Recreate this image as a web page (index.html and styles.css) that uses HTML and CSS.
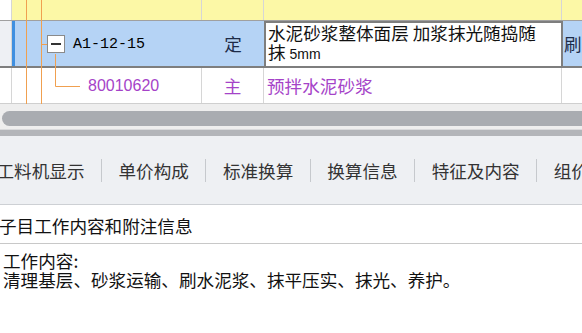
FILE: index.html
```html
<!DOCTYPE html>
<html lang="zh-CN">
<head>
<meta charset="utf-8">
<link rel="stylesheet" href="styles.css">
</head>
<body>
<div class="grid">
  <div class="row row-yellow">
    <div class="cell gutter"></div>
    <div class="cell tree"></div>
    <div class="cell type"></div>
    <div class="cell desc"></div>
    <div class="cell extra"></div>
  </div>
  <div class="row row-sel">
    <div class="cell gutter"></div>
    <div class="cell tree tree-sel">
      <span class="toggle"><span class="minus"></span></span>
      <span class="code">A1-12-15</span>
    </div>
    <div class="cell type type-sel">定</div>
    <div class="cell desc desc-sel">水泥砂浆整体面层 加浆抹光随捣随<br>抹 <span class="unit">5mm</span></div>
    <div class="cell extra extra-sel">刷</div>
  </div>
  <div class="row row-child">
    <div class="cell gutter"></div>
    <div class="cell tree tree-child"><span class="child-code">80010620</span></div>
    <div class="cell type purple">主</div>
    <div class="cell desc purple">预拌水泥砂浆</div>
    <div class="cell extra"></div>
  </div>
  <svg class="tree-lines" width="100" height="105" viewBox="0 0 100 105">
    <g stroke="#f0a050" stroke-width="1" fill="none">
      <line x1="26.5" y1="0" x2="26.5" y2="105"/>
      <line x1="41.5" y1="0" x2="41.5" y2="105"/>
      <line x1="41.5" y1="44.5" x2="47" y2="44.5"/>
      <line x1="55.5" y1="54" x2="55.5" y2="86.5"/>
      <line x1="55.5" y1="86.5" x2="80" y2="86.5"/>
    </g>
  </svg>
</div>
<div class="hscroll"><div class="thumb"></div></div>
<div class="splitter"></div>
<div class="tabs">
  <span class="tab">工料机显示</span><span class="sep"></span>
  <span class="tab">单价构成</span><span class="sep"></span>
  <span class="tab">标准换算</span><span class="sep"></span>
  <span class="tab">换算信息</span><span class="sep"></span>
  <span class="tab">特征及内容</span><span class="sep"></span>
  <span class="tab">组价方案</span>
</div>
<div class="panel">
  <div class="panel-title">子目工作内容和附注信息</div>
  <div class="panel-body">
    <div>工作内容:</div>
    <div>清理基层、砂浆运输、刷水泥浆、抹平压实、抹光、养护。</div>
  </div>
</div>
</body>
</html>
```
FILE: styles.css
```css
* { box-sizing: border-box; }
html, body {
  margin: 0;
  padding: 0;
  width: 582px;
  height: 333px;
  overflow: hidden;
  background: #ffffff;
  font-family: "Noto Sans CJK SC", "Noto Sans", sans-serif;
  color: #111;
}
.grid {
  position: relative;
  width: 582px;
  overflow: hidden;
}
.row {
  display: flex;
  width: 640px;
}
.cell {
  flex: none;
  border-right: 1px solid #d6d6d6;
  overflow: hidden;
  white-space: nowrap;
}
.gutter { width: 12px; }
.tree { width: 190px; }
.type { width: 62px; }
.desc { width: 298px; }
.extra { width: 78px; border-right: none; }

.row-yellow {
  height: 21px;
  border-bottom: 1px solid #d0d0c0;
}
.row-yellow .cell:not(.gutter) { background: #fcf8a6; }

.row-sel {
  height: 48px;
  border-top: 1px solid #a0a0a0;
  border-bottom: 2px solid #7e7e7e;
  margin-top: -1px;
}
.row-sel .gutter { background: #eef0f4; }
.tree-sel {
  background: #b5d3f5;
  border-left: 3px solid #3f8fe0;
  border-right: none;
  display: flex;
  align-items: center;
  padding-left: 32px;
  width: 190px;
}
.toggle {
  flex: none;
  width: 18px;
  height: 18px;
  border: 1px solid #8a8a8a;
  background: #ffffff;
  display: flex;
  align-items: center;
  justify-content: center;
  margin-top: 1px;
}
.minus {
  width: 10px;
  height: 2px;
  background: #333;
}
.code {
  margin-left: 8px;
  font-family: "Liberation Mono", "DejaVu Sans Mono", monospace;
  font-size: 15px;
  color: #000;
  margin-top: 2px;
}
.type-sel {
  background: #b5d3f5;
  border-right: none;
  display: flex;
  align-items: center;
  justify-content: center;
  font-size: 17.6px;
  color: #1d2b48;
}
.desc-sel {
  background: #ffffff;
  border: 2px solid #7e7e7e;
  border-bottom: none;
  width: 299px;
  font-size: 17.6px;
  line-height: 19px;
  padding-left: 2px;
  padding-top: 0;
  color: #111;
}
.unit {
  font-family: "Liberation Sans", "DejaVu Sans", sans-serif;
  font-size: 14px;
}
.extra-sel {
  background: #b5d3f5;
  font-size: 17.6px;
  line-height: 46px;
  padding-left: 1px;
  color: #1d2b48;
}

.row-child {
  height: 36px;
  border-bottom: 1px solid #cfcfcf;
}
.row-child .cell {
  display: flex;
  align-items: center;
  font-size: 17.6px;
}
.tree-child { padding-left: 76px; }
.child-code {
  font-family: "Liberation Sans", "DejaVu Sans", sans-serif;
  font-size: 16px;
  color: #a543c8;
}
.row-child .type { justify-content: center; }
.row-child .desc { padding-left: 3px; }
.purple { color: #a543c8; }

.tree-lines {
  position: absolute;
  left: 0;
  top: 0;
}

.hscroll {
  height: 25px;
  background: #eeeeee;
  padding-top: 7px;
  padding-left: 2px;
}
.thumb {
  height: 15px;
  width: 620px;
  border-radius: 8px;
  background: #a9acb1;
}
.splitter {
  height: 7px;
  background: #b3b5b9;
  border-top: 1px solid #d9dadc;
}
.tabs {
  height: 69px;
  background: #eef0f3;
  border-bottom: 1px solid #cdd0d4;
  display: flex;
  align-items: center;
  margin-left: -20px;
  width: 640px;
  white-space: nowrap;
}
.tab {
  padding: 0 16.5px;
  font-size: 17.6px;
  color: #333;
  flex: none;
}
.sep {
  width: 1px;
  height: 23px;
  background: #c6c9cd;
  flex: none;
}
.panel-title {
  height: 39px;
  padding-top: 4px;
  border-bottom: 1px solid #c8c8c8;
  font-size: 17.6px;
  line-height: 34px;
  margin-left: -1px;
  color: #111;
  white-space: nowrap;
}
.panel-body {
  padding: 7px 0 0 3px;
  font-size: 17.6px;
  line-height: 19px;
  color: #111;
  white-space: nowrap;
}
```
